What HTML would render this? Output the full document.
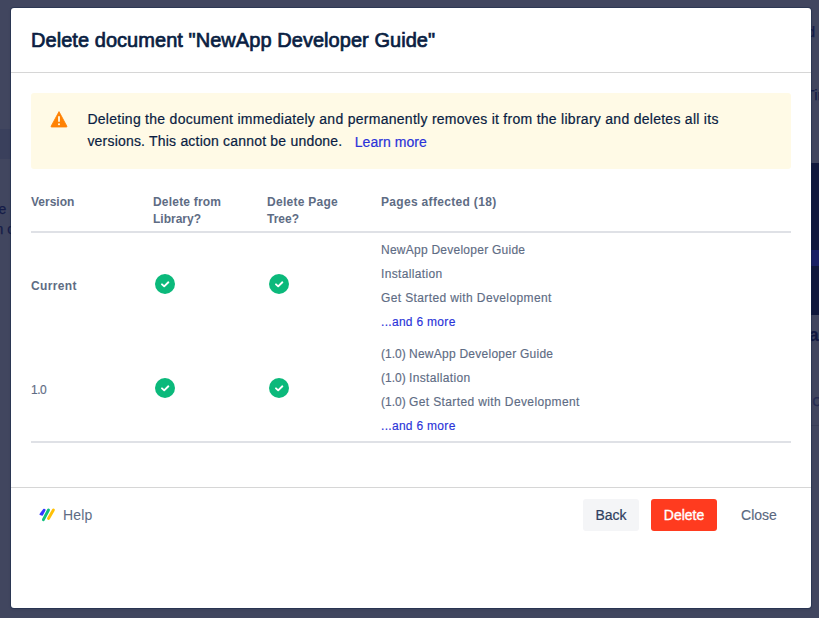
<!DOCTYPE html>
<html lang="en">
<head>
<meta charset="utf-8">
<title>Delete document</title>
<style>
  * { box-sizing: border-box; margin: 0; padding: 0; }
  html, body { width: 819px; height: 618px; overflow: hidden; }
  body {
    position: relative;
    background: #41465f;
    font-family: "Liberation Sans", sans-serif;
    color: #172b4d;
    font-size: 14px;
  }

  /* ---- page behind the blanket (only slivers visible) ---- */
  .bg { position: absolute; }
  .bg-left-band { left: 0; top: 129px; width: 12px; height: 30px; background: #3a405c; }
  .bg-right-navy { left: 805px; top: 163px; width: 14px; height: 152px; background: #10183c; }
  .bg-right-band { left: 805px; top: 249.5px; width: 14px; height: 16.5px; background: #192065; }
  .bg-right-line { left: 811px; top: 425px; width: 8px; height: 1px; background: #393f59; }
  .bg-right-line2 { left: 811px; top: 72px; width: 8px; height: 1px; background: #3b405b; }
  .bg-txt { color: #151c48; -webkit-text-stroke: 0.25px #151c48; font-size: 14px; white-space: nowrap; line-height: 16px; }

  /* ---- modal ---- */
  .modal {
    position: absolute;
    left: 11px; top: 8px;
    width: 800px; height: 600px;
    background: #fff;
    border-radius: 3px;
    box-shadow: 0 0 0 1px rgba(9,30,66,0.32), 0 1px 3px rgba(9,30,66,0.2);
  }
  .modal-header {
    position: absolute; left: 0; top: 0; width: 100%; height: 65px;
    border-bottom: 1px solid #d6d6d6;
  }
  .modal-header h2 {
    position: absolute; left: 20px; top: 20px;
    font-size: 20px; line-height: 24px; font-weight: normal;
    color: #091e42; white-space: nowrap;
    letter-spacing: 0.05px; -webkit-text-stroke: 0.7px #091e42;
  }

  .warn {
    position: absolute; left: 20px; top: 85px; width: 760px; height: 76px;
    background: #fffae6; border-radius: 3px;
  }
  .warn svg { position: absolute; left: 19px; top: 17px; }
  .warn p {
    position: absolute; left: 56.4px; top: 16px;
    font-size: 14px; line-height: 21px; color: #0a1d42; white-space: nowrap;
    letter-spacing: 0.275px; -webkit-text-stroke: 0.2px #0a1d42;
  }
  a { color: #2b33d9; text-decoration: none; }

  /* ---- table ---- */
  .th { position: absolute; top: 186px; font-size: 12px; line-height: 17px; font-weight: bold; color: #5e6c84; white-space: nowrap; }
  .hr { position: absolute; left: 20px; width: 760px; height: 2px; background: #dfe1e6; }
  .cell { position: absolute; font-size: 12px; line-height: 24px; color: #5e6c84; white-space: nowrap; -webkit-text-stroke: 0.15px currentColor; }
  .pages { left: 370px; letter-spacing: 0.22px; }
  .pages div { height: 24px; }
  .chk { position: absolute; width: 20px; height: 20px; }

  /* ---- footer ---- */
  .modal-footer {
    position: absolute; left: 0; top: 479px; width: 100%; height: 1px; background: #d6d6d6;
  }
  .help { position: absolute; left: 52px; top: 498px; font-size: 14px; line-height: 18px; color: #5e6c84; letter-spacing: 0.2px; }
  .logo { position: absolute; left: 27px; top: 499px; }
  .btn {
    position: absolute; top: 491px; height: 32px; border-radius: 3px;
    font-size: 14px; line-height: 32px; text-align: center; white-space: nowrap;
  }
  .btn-back { left: 572px; width: 56px; background: #f4f5f7; color: #2f405f; -webkit-text-stroke: 0.2px #2f405f; }
  .btn-del { left: 640px; width: 66px; background: #ff3b1f; color: #fff; -webkit-text-stroke: 0.35px #fff; }
  .btn-close { left: 718px; width: 60px; color: #5a6880; -webkit-text-stroke: 0.15px #5a6880; }
</style>
</head>
<body>

<!-- page slivers behind the blanket -->
<div class="bg bg-left-band"></div>
<div class="bg bg-txt" style="left:-1.5px; top:201px;">e</div>
<div class="bg bg-txt" style="left:-4.5px; top:221px;">n c</div>
<div class="bg bg-right-navy"></div>
<div class="bg bg-right-band"></div>
<div class="bg bg-right-line"></div>
<div class="bg bg-txt" style="left:807px; top:24.1px; font-size:14.5px;">d</div>
<div class="bg bg-txt" style="left:805.6px; top:86.8px; font-size:15px;">Time</div>
<div class="bg bg-txt" style="left:809px; top:327.1px; font-weight:bold; font-size:17.5px; color:#10173f;">a</div>
<div class="bg bg-txt" style="left:812.4px; top:393.6px; font-size:12px; color:#2a3055;">C</div>

<div class="modal">
  <div class="modal-header">
    <h2>Delete document "NewApp Developer Guide"</h2>
  </div>

  <div class="warn">
    <svg width="18" height="18" viewBox="0 0 18 18">
      <path d="M9 1.6 L16.9 16.2 Q17.2 17 16.4 17 L1.6 17 Q0.8 17 1.1 16.2 Z" fill="#ff8204" stroke="#ff8204" stroke-width="0.8" stroke-linejoin="round"/>
      <rect x="8.1" y="6" width="1.8" height="6" rx="0.9" fill="#fffae6"/>
      <circle cx="9" cy="14.2" r="1.05" fill="#fffae6"/>
    </svg>
    <p>Deleting the document immediately and permanently removes it from the library and deletes all its<br><span style="letter-spacing:0.2px; position:relative; top:0.6px;">versions. This action cannot be undone.</span><a style="position:relative; top:1.5px; margin-left:12.3px; -webkit-text-stroke:0.2px #2b33d9; letter-spacing:0.05px;">Learn more</a></p>
  </div>

  <div class="th" style="left:20px;">Version</div>
  <div class="th" style="left:142px;"><span style="letter-spacing:0.2px">Delete from</span><br>Library?</div>
  <div class="th" style="left:256px;"><span style="letter-spacing:0.27px">Delete Page</span><br>Tree?</div>
  <div class="th" style="left:370px; letter-spacing:0.32px;">Pages affected (18)</div>
  <div class="hr" style="top:223px;"></div>

  <!-- row 1 -->
  <div class="cell" style="left:20px; top:266px; font-weight:bold; letter-spacing:0.35px; -webkit-text-stroke:0;">Current</div>
  <svg class="chk" style="left:144px; top:266px;" viewBox="0 0 20 20"><circle cx="10" cy="10" r="10" fill="#0bb97b"/><path d="M7.0 10.35 L9.2 12.35 L13.35 8.3" fill="none" stroke="#fff" stroke-width="1.9" stroke-linecap="round" stroke-linejoin="round"/></svg>
  <svg class="chk" style="left:258px; top:266px;" viewBox="0 0 20 20"><circle cx="10" cy="10" r="10" fill="#0bb97b"/><path d="M7.0 10.35 L9.2 12.35 L13.35 8.3" fill="none" stroke="#fff" stroke-width="1.9" stroke-linecap="round" stroke-linejoin="round"/></svg>
  <div class="cell pages" style="top:230px;">
    <div style="letter-spacing:0.25px">NewApp Developer Guide</div>
    <div style="letter-spacing:0.34px">Installation</div>
    <div style="letter-spacing:0.38px">Get Started with Development</div>
    <div style="letter-spacing:0.3px"><a>...and 6 more</a></div>
  </div>

  <!-- row 2 -->
  <div class="cell" style="left:20px; top:370px; letter-spacing:-0.5px;">1.0</div>
  <svg class="chk" style="left:144px; top:370px;" viewBox="0 0 20 20"><circle cx="10" cy="10" r="10" fill="#0bb97b"/><path d="M7.0 10.35 L9.2 12.35 L13.35 8.3" fill="none" stroke="#fff" stroke-width="1.9" stroke-linecap="round" stroke-linejoin="round"/></svg>
  <svg class="chk" style="left:258px; top:370px;" viewBox="0 0 20 20"><circle cx="10" cy="10" r="10" fill="#0bb97b"/><path d="M7.0 10.35 L9.2 12.35 L13.35 8.3" fill="none" stroke="#fff" stroke-width="1.9" stroke-linecap="round" stroke-linejoin="round"/></svg>
  <div class="cell pages" style="top:334px;">
    <div style="letter-spacing:0.25px"><span style="letter-spacing:0">(1.0) </span>NewApp Developer Guide</div>
    <div style="letter-spacing:0.34px"><span style="letter-spacing:0">(1.0) </span>Installation</div>
    <div style="letter-spacing:0.38px"><span style="letter-spacing:0">(1.0) </span>Get Started with Development</div>
    <div style="letter-spacing:0.3px"><a>...and 6 more</a></div>
  </div>
  <div class="hr" style="top:433px;"></div>

  <!-- footer -->
  <div class="modal-footer"></div>
  <svg class="logo" width="18" height="16" viewBox="0 0 18 16">
    <path d="M5.9 2.5 L6.9 3.0 L4.3 8.0 L2.2 7.4 L3.0 6.3 Z" fill="#3535ff" stroke="#3535ff" stroke-width="1.5" stroke-linejoin="round"/>
    <path d="M5.4 12.7 L10.5 3.0" stroke="#10c07c" stroke-width="2.9" stroke-linecap="round" fill="none"/>
    <path d="M10.5 11.4 L15.4 3.1" stroke="#ffc107" stroke-width="2.9" stroke-linecap="round" fill="none"/>
  </svg>
  <div class="help">Help</div>
  <div class="btn btn-back">Back</div>
  <div class="btn btn-del">Delete</div>
  <div class="btn btn-close">Close</div>
</div>

</body>
</html>
